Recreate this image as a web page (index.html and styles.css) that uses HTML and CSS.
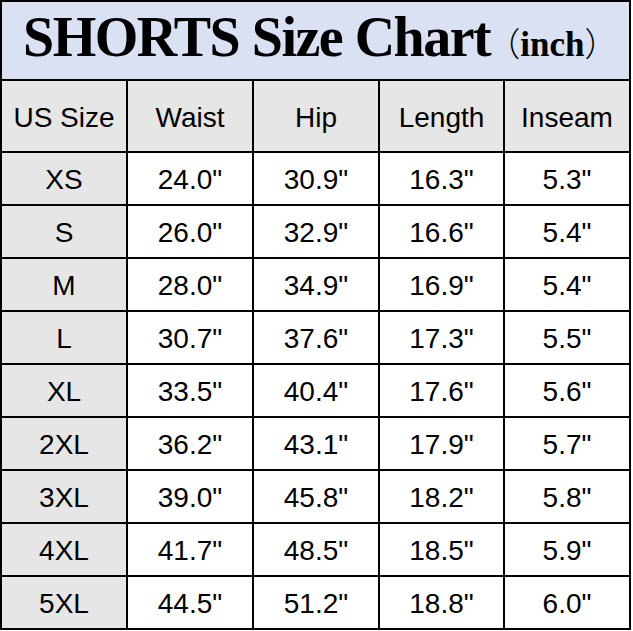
FILE: index.html
```html
<!DOCTYPE html>
<html>
<head>
<meta charset="utf-8">
<link rel="stylesheet" href="styles.css">
</head>
<body>
<div class="chart">
  <div class="title"><span class="main">SHORTS Size Chart</span><span class="unit"><span class="paren">（</span>inch<span class="paren">）</span></span></div>
  <div class="cell head">US Size</div><div class="cell head">Waist</div><div class="cell head">Hip</div><div class="cell head">Length</div><div class="cell head">Inseam</div>
  <div class="cell size">XS</div><div class="cell">24.0"</div><div class="cell">30.9"</div><div class="cell">16.3"</div><div class="cell">5.3"</div>
  <div class="cell size">S</div><div class="cell">26.0"</div><div class="cell">32.9"</div><div class="cell">16.6"</div><div class="cell">5.4"</div>
  <div class="cell size">M</div><div class="cell">28.0"</div><div class="cell">34.9"</div><div class="cell">16.9"</div><div class="cell">5.4"</div>
  <div class="cell size">L</div><div class="cell">30.7"</div><div class="cell">37.6"</div><div class="cell">17.3"</div><div class="cell">5.5"</div>
  <div class="cell size">XL</div><div class="cell">33.5"</div><div class="cell">40.4"</div><div class="cell">17.6"</div><div class="cell">5.6"</div>
  <div class="cell size">2XL</div><div class="cell">36.2"</div><div class="cell">43.1"</div><div class="cell">17.9"</div><div class="cell">5.7"</div>
  <div class="cell size">3XL</div><div class="cell">39.0"</div><div class="cell">45.8"</div><div class="cell">18.2"</div><div class="cell">5.8"</div>
  <div class="cell size">4XL</div><div class="cell">41.7"</div><div class="cell">48.5"</div><div class="cell">18.5"</div><div class="cell">5.9"</div>
  <div class="cell size">5XL</div><div class="cell">44.5"</div><div class="cell">51.2"</div><div class="cell">18.8"</div><div class="cell">6.0"</div>
</div>
</body>
</html>
```
FILE: styles.css
```css
html, body {
  margin: 0;
  padding: 0;
  background: #ffffff;
}
.chart {
  display: grid;
  width: 631px;
  box-sizing: border-box;
  grid-template-columns: 124px 124px 124px 123px 124px;
  grid-template-rows: 77px 70px repeat(9, 51px);
  gap: 2px;
  padding: 2px;
  background: #000000;
}
.title {
  grid-column: 1 / -1;
  background: #d9e1f2;
  display: flex;
  align-items: baseline;
  padding-left: 21px;
  padding-top: 7px;
  box-sizing: border-box;
  color: #000;
  font-family: "Liberation Serif", serif;
  font-weight: bold;
  white-space: nowrap;
  line-height: 1;
}
.main {
  font-size: 56px;
  letter-spacing: -1.5px;
}
.unit {
  font-size: 35px;
  margin-left: -3px;
}
.paren {
  font-family: "Noto Sans CJK SC", sans-serif;
  font-weight: 300;
  font-size: 33px;
}
.cell {
  background: #ffffff;
  display: flex;
  align-items: center;
  justify-content: center;
  padding-top: 3px;
  font-family: "Liberation Sans", Arial, sans-serif;
  font-size: 28px;
  color: #000;
}
.head, .size {
  background: #e6e6e6;
}
```
